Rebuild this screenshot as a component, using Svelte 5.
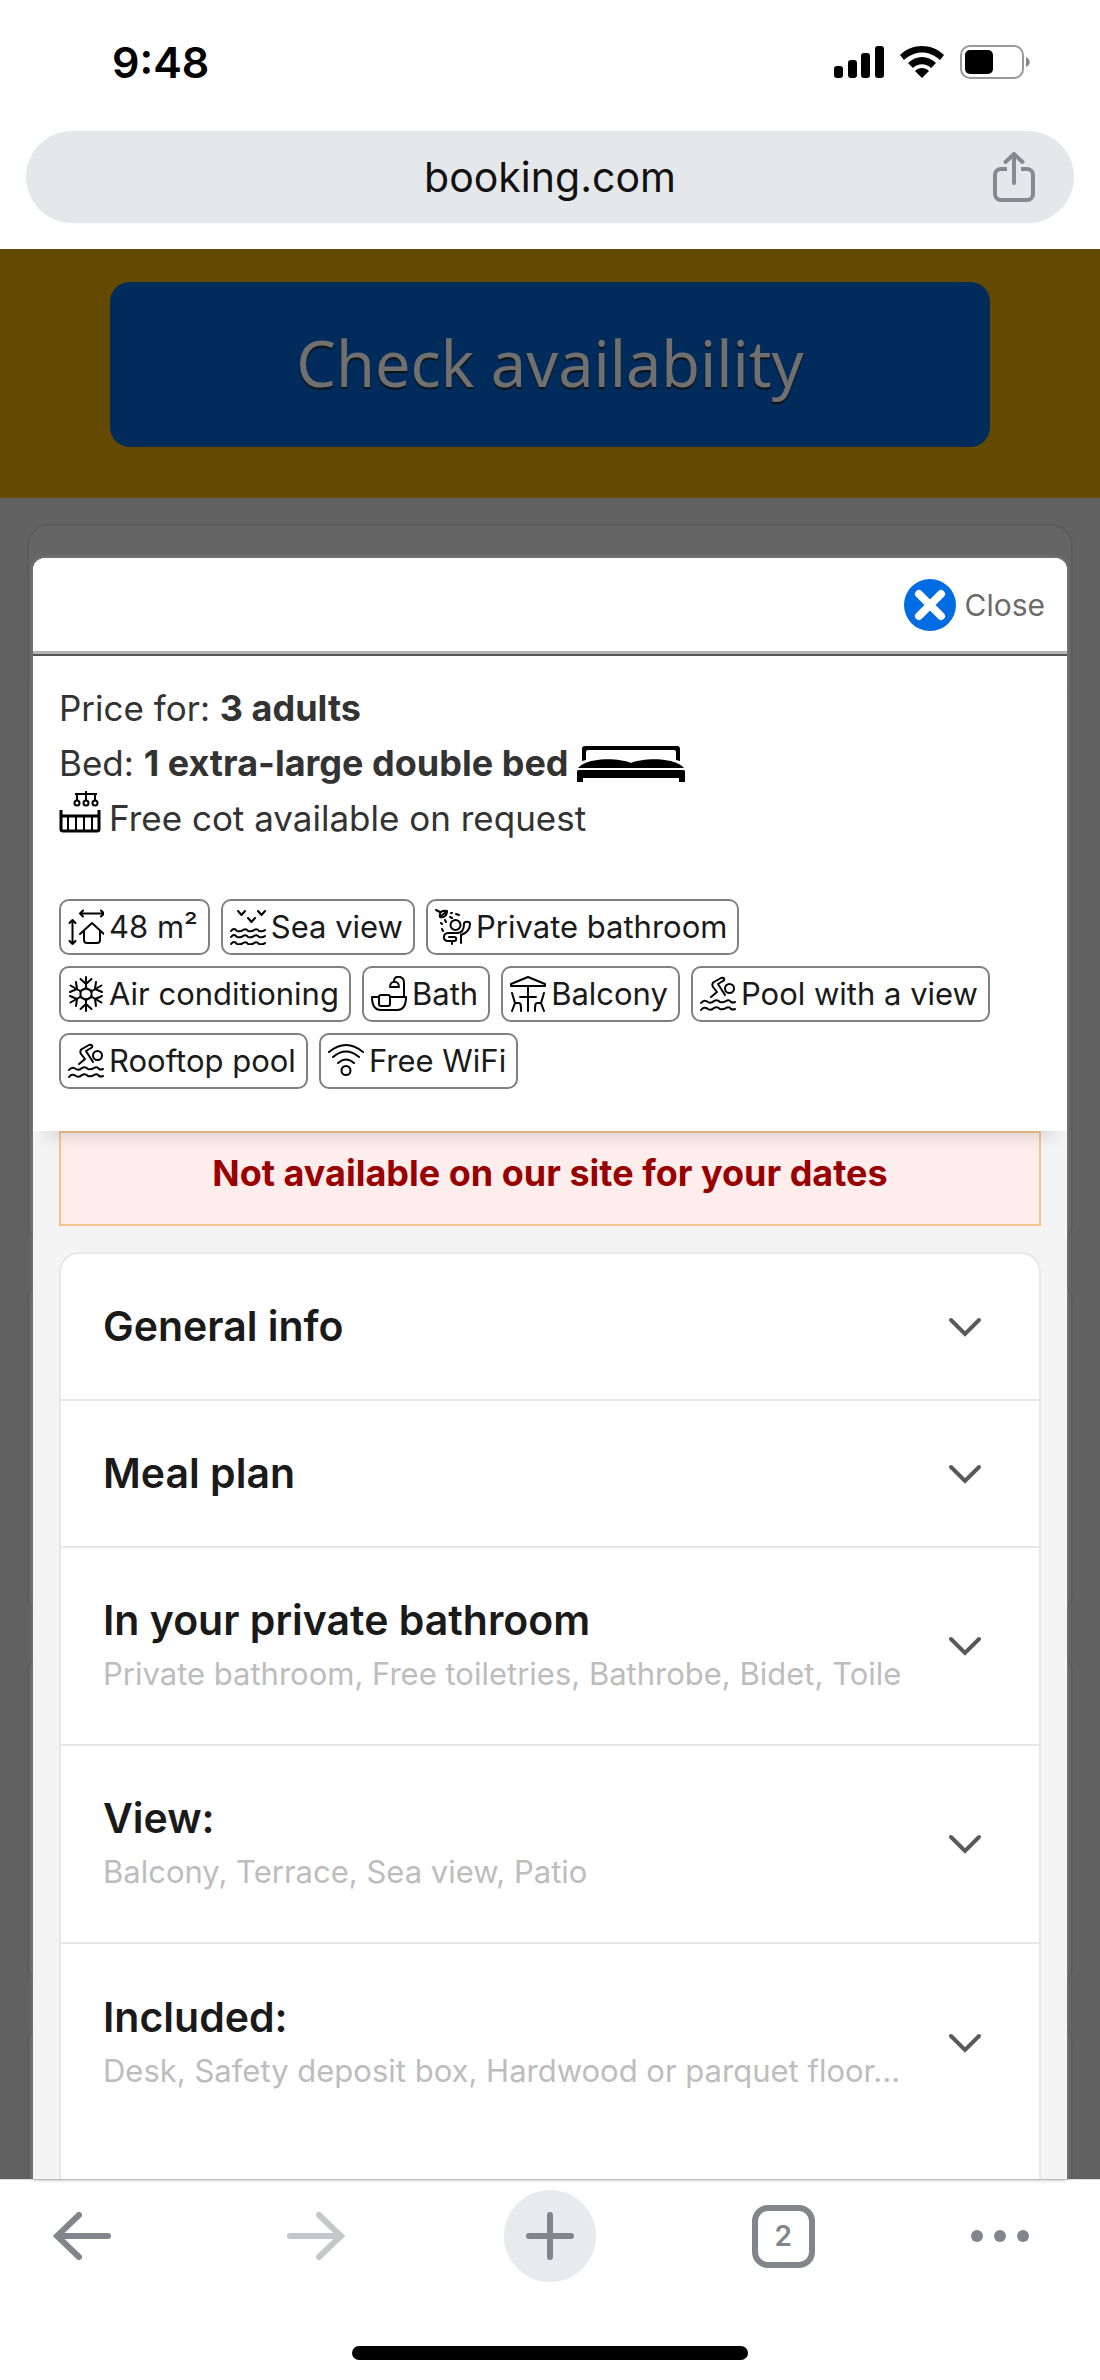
<script>
	const icons = {
		size: [
			'M12 4.5h24M15 1.5l-3 3 3 3M33 1.5l3 3-3 3',
			'M4.5 11v24M1.5 14l3-3 3 3M1.5 32l3 3 3-3',
			'M12 25l12-11 12 11M16 22v9a3 3 0 0 0 3 3h10a3 3 0 0 0 3-3v-9'
		],
		sea: [
			'M8 2l3.5 4L15 2M28 2l3.5 4L35 2M18 9l3.5 4L25 9',
			'M1 22q3-4 6 0 4 1 6-1 3-2 5 1 4 1 6-1 3-2 5 1 4 1 6-1',
			'M1 28q3-4 6 0 4 1 6-1 3-2 5 1 4 1 6-1 3-2 5 1 4 1 6-1',
			'M1 35q3-4 6 0 4 1 6-1 3-2 5 1 4 1 6-1 3-2 5 1 4 1 6-1'
		],
		shower: [
			'M1 1l4 2M5 8c-1-5 2-7 7-6M5 8l7-6M5 8c3 1 7-1 7-6M16 4h1M21 5l3 1M10 11l1 2M15 8l2 1M6 14l1 1M7 20l1 2',
			'M15.5 16a5 5 0 1 0 10 0a5 5 0 1 0-10 0',
			'M29 15c0-3 6-3 6 0 0 6-3 9-9 11v8M29 15c0 7-3 9-7 9H13c-5 0-6 8 0 8h6c3 0 3-4 0-4h-5M17 32v3'
		],
		snow: [
			'M18 1v12M18 23v12M12.5 3l5.5 5 5.5-5M12.5 33l5.5-5 5.5 5',
			'M2.500 9.500l10.500 6M23 20.5l10.5 6M2.5 26.5l10.5-6M23 15.5l10.5-6',
			'M2 16l7-3-1-7M34 20l-7 3 1 7M2 20l7 3-1 7M34 16l-7-3 1-7',
			'M18 12l5.5 3v6L18 24l-5.5-3v-6z'
		],
		bath: [
			'M8 21H1c0 9 3 13 9 13h16c6 0 9-4 9-13H20',
			'M10 19h7a2 2 0 0 1 2 2v7a2 2 0 0 1-2 2h-7a2 2 0 0 1-2-2v-7a2 2 0 0 1 2-2z',
			'M33 21V7c0-8-10-8-10-2M19 11c0-7 9-7 9 0z'
		],
		balcony: [
			'M18 1L1 8v2h34V8zM18 10v25M10 21h16',
			'M2 17l3 10h4c2 0 2 2 2 8M5 27l-3 8M34 17l-3 10h-4c-2 0-2 2-2 8M31 27l3 8'
		],
		pool: [
			'M11 21l6-5-4-5c-1-2-1-4 1-5l7-4c4-1 4 2 2 3l-5 3 7 11',
			'M25 12.5a4.5 4.5 0 1 0 9 0a4.5 4.5 0 1 0-9 0',
			'M1 27q3-4 7-1 3 2 6-1 3-2 6 1 3 1 6-1 3-2 5 1 2 1 4 0',
			'M1 34q3-4 7-1 3 2 6-1 3-2 6 1 3 1 6-1 3-2 5 1 2 1 4 0'
		],
		wifi: [
			'M1 9q17-14 34 0M5 14q13-11 26 0M10 20q8-7 16 0',
			'M13.5 27.5a4.5 4.5 0 1 0 9 0a4.5 4.5 0 1 0-9 0'
		]
	};

	const facilities = [
		{ icon: 'size', label: '48 m²' },
		{ icon: 'sea', label: 'Sea view' },
		{ icon: 'shower', label: 'Private bathroom' },
		{ icon: 'snow', label: 'Air conditioning' },
		{ icon: 'bath', label: 'Bath' },
		{ icon: 'balcony', label: 'Balcony' },
		{ icon: 'pool', label: 'Pool with a view' },
		{ icon: 'pool', label: 'Rooftop pool' },
		{ icon: 'wifi', label: 'Free WiFi' }
	];

	const sections = [
		{ title: 'General info' },
		{ title: 'Meal plan' },
		{
			title: 'In your private bathroom',
			detail: 'Private bathroom, Free toiletries, Bathrobe, Bidet, Toile'
		},
		{ title: 'View:', detail: 'Balcony, Terrace, Sea view, Patio' },
		{ title: 'Included:', detail: 'Desk, Safety deposit box, Hardwood or parquet floor...' }
	];
</script>

<div class="screen">
	<header class="status">
		<span class="time">9:48</span>
		<div class="signals">
			<svg width="50" height="32" viewBox="0 0 50 32">
				<rect x="0" y="20" width="9" height="12" rx="3" />
				<rect x="14" y="14" width="9" height="18" rx="3" />
				<rect x="27" y="7" width="9" height="25" rx="3" />
				<rect x="41" y="0" width="9" height="32" rx="3" />
			</svg>
			<svg width="44" height="32" viewBox="0 0 44 32">
				<path d="M0 9C12-3 32-3 44 9l-4 5C29 4 15 4 4 14z" />
				<path d="M8 17c8-8 20-8 28 0l-5 5c-5-5-13-5-18 0z" />
				<path d="M15 25c4-4 10-4 14 0l-7 7z" />
			</svg>
			<svg width="70" height="34" viewBox="0 0 70 34">
				<rect x="1" y="1" width="62" height="32" rx="9" fill="none" stroke="#999" stroke-width="2" />
				<rect x="5" y="5" width="28" height="24" rx="5" />
				<path d="M66 12c5 2 5 8 0 10z" fill="#888" />
			</svg>
		</div>
	</header>

	<div class="address">
		<a class="url" href="#booking">booking.com</a>
		<button class="share" aria-label="Share">
			<svg width="42" height="50" viewBox="0 0 42 50">
				<path d="M14 17H8a6 6 0 0 0-6 6v19a6 6 0 0 0 6 6h26a6 6 0 0 0 6-6V23a6 6 0 0 0-6-6h-6" stroke-width="4" />
				<path d="M21 31V3M12.5 10L21 2l8.5 8" stroke-width="4" stroke-linecap="round" />
			</svg>
		</button>
	</div>

	<main class="page">
		<div class="search">
			<button class="check">Check availability</button>
		</div>

		<div class="stage">
			<div class="behind">
				<div class="tall"></div>
				<div></div>
				<div></div>
				<div class="rest"></div>
			</div>

			<section class="modal">
				<div class="modal-head">
					<button class="close">
						<svg width="52" height="52" viewBox="0 0 52 52">
							<circle cx="26" cy="26" r="26" fill="#006ce4" />
							<path d="M15 15l22 22M37 15L15 37" stroke="#fff" stroke-width="8" stroke-linecap="round" />
						</svg>
						<span>Close</span>
					</button>
				</div>

				<div class="summary">
					<p><span>Price for: <b>3 adults</b></span></p>
					<p>
						<span>Bed: <b>1 extra-large double bed</b></span>
						<svg class="bed" width="108" height="36" viewBox="0 0 108 36">
							<path d="M5 15V3a3 3 0 0 1 3-3h92a3 3 0 0 1 3 3v12l-4-1V6a2 2 0 0 0-2-2H11a2 2 0 0 0-2 2v8z" />
							<path d="M1 22c8-10 38-11 53-5c15-6 45-5 53 5z" />
							<path d="M0 25a2 2 0 0 1 2-1h104a2 2 0 0 1 2 1v11h-6v-4H6v4H0z" />
						</svg>
					</p>
					<p>
						<svg class="cot" width="42" height="42" viewBox="0 0 42 42">
							<path d="M27 0v10M16 3h22M18 3v6M36 3v6" />
							<circle cx="18" cy="12" r="2.5" />
							<circle cx="27" cy="12" r="2.5" />
							<circle cx="36" cy="12" r="2.5" />
							<path d="M2 19v19a2 2 0 0 0 2 2h34a2 2 0 0 0 2-2V19M2 25h38" stroke-width="3" />
							<path d="M9 25v14M17 25v14M25 25v14M33 25v14" />
						</svg>
						<span>Free cot available on request</span>
					</p>

					<ul class="facilities">
						{#each facilities as item}
							<li>
								<svg width="36" height="36" viewBox="0 0 36 36">
									{#each icons[item.icon] as d}
										<path {d} />
									{/each}
								</svg>
								<span>{item.label}</span>
							</li>
						{/each}
					</ul>
				</div>

				<div class="body">
					<p class="notice">Not available on our site for your dates</p>
					<div class="accordion">
						{#each sections as section}
							<button class="row" class:detailed={section.detail}>
								<span class="text">
									<span class="title">{section.title}</span>
									{#if section.detail}
										<span class="detail">{section.detail}</span>
									{/if}
								</span>
								<svg width="34" height="20" viewBox="0 0 34 20">
									<path d="M3 3l14 14L31 3" />
								</svg>
							</button>
						{/each}
					</div>
				</div>
			</section>
		</div>
	</main>

	<nav class="toolbar">
		<button aria-label="Back">
			<svg width="58" height="50" viewBox="0 0 58 50">
				<path d="M55 25H4M26 4L4 25l22 21" stroke="#80868b" />
			</svg>
		</button>
		<button aria-label="Forward" disabled>
			<svg width="58" height="50" viewBox="0 0 58 50">
				<path d="M3 25h51M32 4l22 21-22 21" stroke="#c6c7c8" />
			</svg>
		</button>
		<button class="new-tab" aria-label="New tab">
			<svg width="48" height="48" viewBox="0 0 48 48">
				<path d="M24 3v42M3 24h42" stroke="#80868b" />
			</svg>
		</button>
		<button class="tabs" aria-label="Tabs"><span>2</span></button>
		<button class="more" aria-label="More">
			<svg width="58" height="50" viewBox="0 0 58 50" fill="#80868b">
				<circle cx="6" cy="25" r="6" />
				<circle cx="29" cy="25" r="6" />
				<circle cx="52" cy="25" r="6" />
			</svg>
		</button>
	</nav>
	<div class="home"><span></span></div>
</div>

<style>
	:global(body) {
		margin: 0;
		background: #fff;
	}
	.screen {
		display: flex;
		flex-direction: column;
		min-height: 100vh;
		font-family: Inter, 'Liberation Sans', sans-serif;
		color: #1a1a1a;
	}
	button {
		font: inherit;
		color: inherit;
		border: 0;
		padding: 0;
		margin: 0;
		background: none;
		cursor: pointer;
	}
	svg {
		display: block;
		flex: none;
	}
	p {
		margin: 0;
	}

	.status {
		display: flex;
		justify-content: space-between;
		align-items: center;
		padding: 36px 70px 0 112px;
	}
	.time {
		font-size: 43px;
		line-height: 52px;
		font-weight: 600;
		color: #000;
	}
	.signals {
		display: flex;
		align-items: center;
		gap: 16px;
	}

	.address {
		display: grid;
		grid-template-columns: 1fr auto 1fr;
		align-items: center;
		height: 92px;
		margin: 43px 26px 26px;
		border-radius: 46px;
		background: #e5e8eb;
	}
	.url {
		grid-column: 2;
		font-size: 41px;
		line-height: 52px;
		color: #111;
		text-decoration: none;
	}
	.share {
		justify-self: end;
		margin-right: 39px;
	}
	.share svg {
		fill: none;
		stroke: #868a8e;
	}

	.page {
		flex: 1;
		display: flex;
		flex-direction: column;
		background: #616161;
	}
	.search {
		padding: 33px 10% 51px;
		background: #644900;
	}
	.check {
		display: block;
		width: 100%;
		height: 165px;
		border-radius: 20px;
		background: #002b5b;
		color: #707070;
		font-family: 'Noto Sans', sans-serif;
		font-size: 63px;
		line-height: 84px;
		padding-bottom: 4px;
		text-shadow: 0 2px 1px #111;
	}

	.stage {
		position: relative;
		flex: 1;
		display: flex;
		padding: 60px 33px 0;
	}
	.behind {
		position: absolute;
		inset: 26px 27px 0;
		display: flex;
		flex-direction: column;
		gap: 33px;
		overflow: hidden;
	}
	.behind div {
		box-sizing: border-box;
		flex: none;
		height: 338px;
		border: 2px solid #5c5c5c;
		border-radius: 22px;
		background: #656565;
	}
	.behind .tall {
		height: 722px;
	}
	.behind .rest {
		flex: 1;
		border-bottom: 0;
		border-radius: 22px 22px 0 0;
	}

	.modal {
		position: relative;
		flex: 1;
		min-width: 0;
		display: flex;
		flex-direction: column;
		border-radius: 12px 12px 0 0;
		background: #f4f4f4;
		box-shadow: 0 0 4px #888;
	}
	.modal-head {
		display: flex;
		justify-content: flex-end;
		padding: 21px 22px 20px;
		border-bottom: 3px solid #b5b5b5;
		border-radius: 12px 12px 0 0;
		background: #fff;
	}
	.close {
		display: flex;
		align-items: center;
		gap: 9px;
		font-size: 30px;
		line-height: 52px;
		color: #6b6b6b;
	}

	.summary {
		position: relative;
		padding: 25px 26px 42px;
		border-top: 2px solid #555;
		background: #fff;
		box-shadow: 0 18px 16px -12px rgba(0, 0, 0, 0.12);
		color: #333;
	}
	.summary p {
		display: flex;
		align-items: center;
		gap: 8px;
		font-size: 35px;
		line-height: 55px;
	}
	.summary b {
		font-size: 36px;
	}
	.bed {
		fill: #000;
	}
	.cot {
		align-self: flex-start;
		fill: none;
		stroke: #000;
		stroke-width: 2;
	}
	.facilities {
		display: flex;
		flex-wrap: wrap;
		gap: 11px;
		margin: 53px 0 0;
		padding: 0;
		list-style: none;
	}
	.facilities li {
		display: flex;
		align-items: center;
		gap: 5px;
		padding: 0 10px 0 7px;
		border: 2px solid #808080;
		border-radius: 10px;
		font-size: 31px;
		line-height: 52px;
		color: #1a1a1a;
	}
	.facilities svg {
		fill: none;
		stroke: #000;
		stroke-width: 2;
		stroke-linecap: round;
		stroke-linejoin: round;
	}

	.body {
		flex: 1;
		display: flex;
		flex-direction: column;
		gap: 26px;
		padding: 0 26px;
	}
	.notice {
		padding: 13px 20px 23px;
		border: 2px solid #f3c48f;
		background: #fdeeed;
		color: #900;
		font-size: 36px;
		line-height: 55px;
		font-weight: 700;
		text-align: center;
	}
	.accordion {
		flex: 1;
		display: flex;
		flex-direction: column;
		border: 2px solid #e7e7e7;
		border-bottom: 0;
		border-radius: 20px 20px 0 0;
		background: #fff;
	}
	.row {
		display: flex;
		align-items: center;
		justify-content: space-between;
		gap: 40px;
		height: 147px;
		padding: 0 57px 0 42px;
		border-bottom: 2px solid #e7e7e7;
		text-align: left;
	}
	.row.detailed {
		height: 198px;
	}
	.row:last-child {
		border-bottom: 0;
	}
	.text {
		flex: 1;
		min-width: 0;
		display: flex;
		flex-direction: column;
	}
	.title {
		font-size: 41px;
		line-height: 55px;
		font-weight: 600;
	}
	.detail {
		overflow: hidden;
		white-space: nowrap;
		font-size: 31px;
		line-height: 52px;
		color: #bdbdbd;
	}
	.row svg {
		fill: none;
		stroke: #595959;
		stroke-width: 4;
		stroke-linecap: round;
	}

	.toolbar {
		display: flex;
		align-items: center;
		justify-content: space-between;
		padding: 10px 71px 0 36px;
		border-top: 1px solid #ddd;
		background: #fff;
	}
	.toolbar button {
		display: grid;
		place-items: center;
		width: 92px;
		height: 92px;
	}
	.toolbar path {
		fill: none;
		stroke-width: 6;
		stroke-linecap: round;
	}
	.toolbar .new-tab {
		border-radius: 50%;
		background: #e8eaed;
	}
	.toolbar .more {
		width: 58px;
	}
	.tabs span {
		display: block;
		width: 51px;
		border: 6px solid #80868b;
		border-radius: 16px;
		font-size: 28px;
		line-height: 51px;
		font-weight: 600;
		text-align: center;
		color: #80868b;
	}
	.home {
		display: flex;
		justify-content: center;
		padding: 64px 0 20px;
		background: #fff;
	}
	.home span {
		width: 36%;
		height: 14px;
		border-radius: 7px;
		background: #000;
	}
</style>
